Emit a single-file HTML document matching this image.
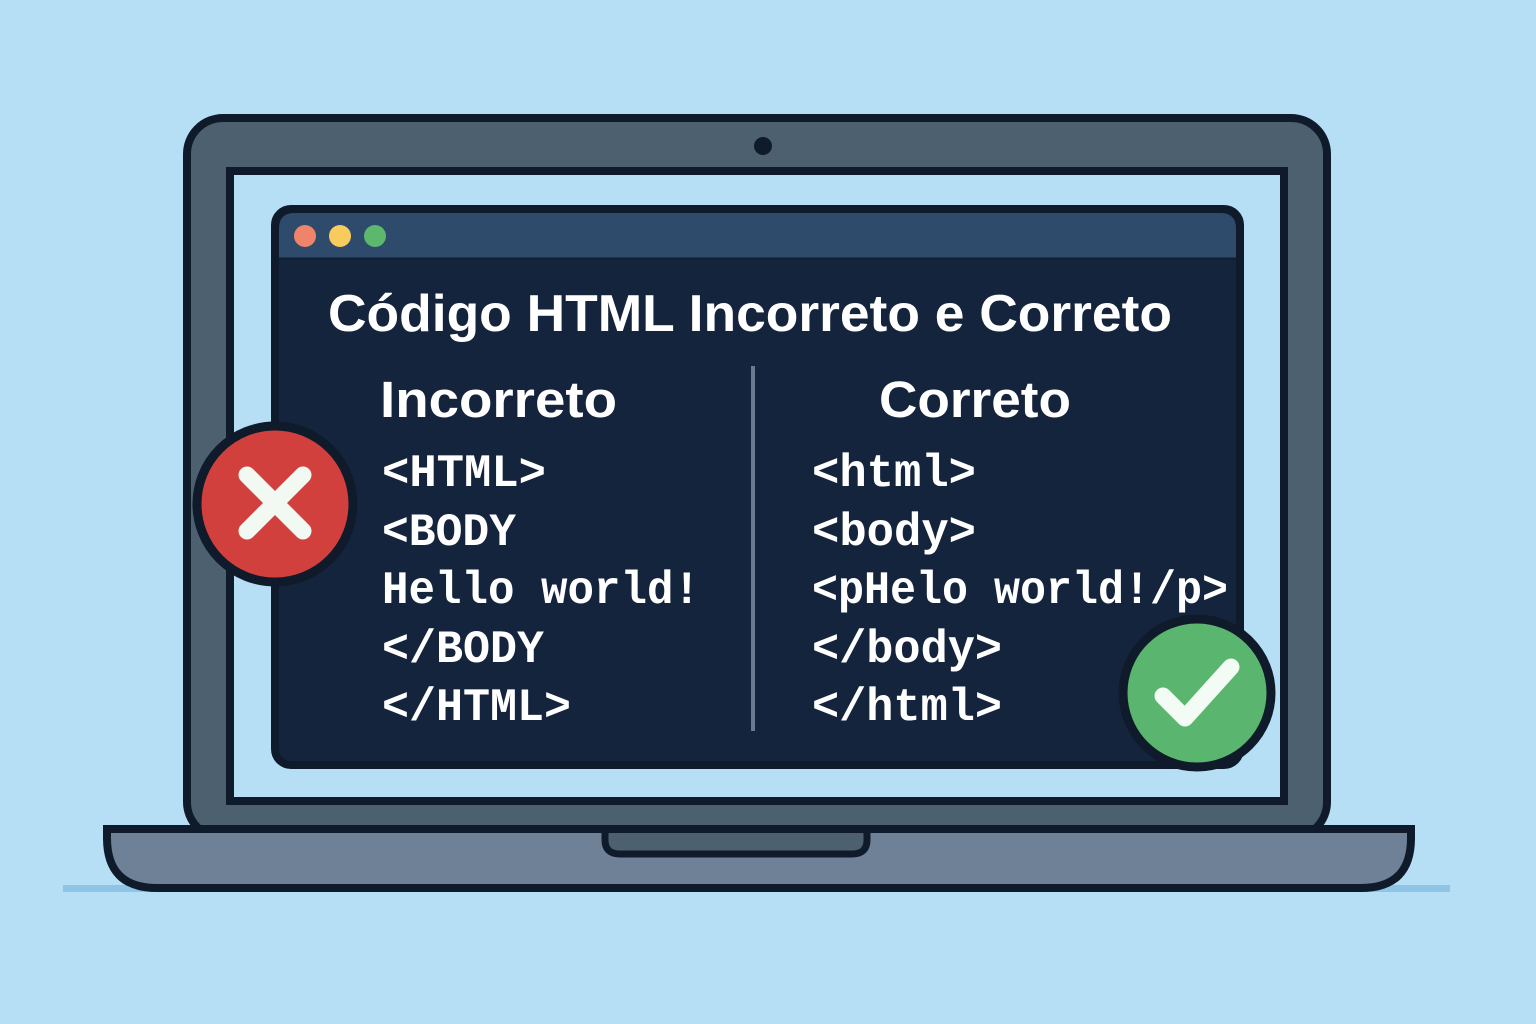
<!DOCTYPE html>
<html><head><meta charset="utf-8"><style>
html,body{margin:0;padding:0;background:#b6dff6;}
svg{display:block}
</style></head><body>
<svg width="1536" height="1024" viewBox="0 0 1536 1024" xmlns="http://www.w3.org/2000/svg">
<rect width="1536" height="1024" fill="#b6dff6"/>
<rect x="63" y="885" width="1387" height="7" fill="#8ec5e6"/>
<!-- lid -->
<rect x="187" y="118" width="1140" height="720" rx="36" fill="#4d6070" stroke="#0f1b2a" stroke-width="8"/>
<rect x="230" y="171" width="1054" height="630" fill="#b6dff6" stroke="#0f1b2a" stroke-width="8"/>
<circle cx="763" cy="146" r="9" fill="#0f1b2a"/>
<!-- base -->
<path d="M107 829 H1411 V838 Q1411 888 1361 888 H157 Q107 888 107 838 Z" fill="#6e8196" stroke="#0f1b2a" stroke-width="8"/>
<path d="M605 833 V840 Q605 854 620 854 H852 Q867 854 867 840 V833" fill="#4d6070" stroke="#0f1b2a" stroke-width="7"/>
<!-- window -->
<rect x="275" y="209" width="965" height="556" rx="16" fill="#15243d" stroke="#0f1b2a" stroke-width="8"/>
<path d="M279 258 V229 Q279 213 295 213 H1220 Q1236 213 1236 229 V258 Z" fill="#2f4b6b"/>
<rect x="279" y="257" width="957" height="3" fill="#0f1b2a" opacity="0.5"/>
<circle cx="305" cy="236" r="11" fill="#f0846a"/>
<circle cx="340" cy="236" r="11" fill="#f7cc5c"/>
<circle cx="375" cy="236" r="11" fill="#5cb86c"/>
<g fill="#ffffff" font-family="Liberation Sans, sans-serif" font-weight="bold">
<text x="328" y="331" font-size="52" textLength="844" lengthAdjust="spacingAndGlyphs">Código HTML Incorreto e Correto</text>
<text x="380" y="417" font-size="51" textLength="237" lengthAdjust="spacingAndGlyphs">Incorreto</text>
<text x="879" y="417" font-size="51" textLength="192" lengthAdjust="spacingAndGlyphs">Correto</text>
</g>
<rect x="751" y="366" width="4" height="365" fill="#6b7a8e"/>
<g fill="#ffffff" font-family="Liberation Mono, monospace" font-weight="bold" font-size="46">
<text x="382" y="486" textLength="164" lengthAdjust="spacingAndGlyphs">&lt;HTML&gt;</text>
<text x="382" y="545" textLength="134" lengthAdjust="spacingAndGlyphs">&lt;BODY</text>
<text x="382" y="603" textLength="318" lengthAdjust="spacingAndGlyphs">Hello world!</text>
<text x="382" y="662" textLength="162" lengthAdjust="spacingAndGlyphs">&lt;/BODY</text>
<text x="382" y="720" textLength="189" lengthAdjust="spacingAndGlyphs">&lt;/HTML&gt;</text>
<text x="812" y="486" textLength="164" lengthAdjust="spacingAndGlyphs">&lt;html&gt;</text>
<text x="812" y="545" textLength="164" lengthAdjust="spacingAndGlyphs">&lt;body&gt;</text>
<text x="812" y="603" textLength="416" lengthAdjust="spacingAndGlyphs">&lt;pHelo world!/p&gt;</text>
<text x="812" y="662" textLength="190" lengthAdjust="spacingAndGlyphs">&lt;/body&gt;</text>
<text x="812" y="720" textLength="190" lengthAdjust="spacingAndGlyphs">&lt;/html&gt;</text>
</g>
<!-- red X -->
<circle cx="275" cy="504" r="78" fill="#d2403d" stroke="#0f1b2a" stroke-width="9"/>
<path d="M247 475 L303 531 M303 475 L247 531" stroke="#f2f8f2" stroke-width="17" stroke-linecap="round"/>
<!-- green check -->
<circle cx="1197" cy="693" r="74" fill="#5ab56e" stroke="#0f1b2a" stroke-width="9"/>
<path d="M1163 696 L1185 718 L1231 667" fill="none" stroke="#f2fbf4" stroke-width="17" stroke-linecap="round" stroke-linejoin="round"/>
</svg>
</body></html>
